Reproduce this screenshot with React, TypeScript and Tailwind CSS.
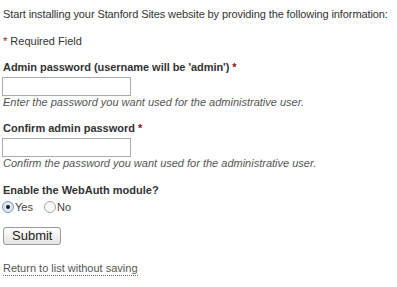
export default function App() {
  return (
    <div className="min-h-screen bg-white text-[11px] leading-[14px] text-[#333] font-['Liberation_Sans',Arial,sans-serif] px-[3px] pt-[7px]">
      <p className="whitespace-nowrap tracking-[-0.1px]">
        Start installing your Stanford Sites website by providing the following information:
      </p>

      <p className="mt-[13px]">
        <span className="text-[#8c1515]">*</span> Required Field
      </p>

      <form className="mt-[12px]" onSubmit={(e) => e.preventDefault()}>
        <div>
          <label className="block font-bold tracking-[-0.05px]">
            Admin password (username will be 'admin') <span className="text-[#8c1515]">*</span>
          </label>
          <input type="password" className="mt-[3px] ml-[-1px] block w-[129px] h-[19px] border border-[#aaa] bg-white" />
          <p className="mt-[-1px] italic text-[#555]">Enter the password you want used for the administrative user.</p>
        </div>

        <div className="mt-[12px]">
          <label className="block font-bold">
            Confirm admin password <span className="text-[#8c1515]">*</span>
          </label>
          <input type="password" className="mt-[3px] ml-[-1px] block w-[129px] h-[19px] border border-[#aaa] bg-white" />
          <p className="mt-[-1px] italic text-[#555]">Confirm the password you want used for the administrative user.</p>
        </div>

        <div className="mt-[13px]">
          <div className="font-bold">Enable the WebAuth module?</div>
          <div className="flex items-center mt-[3px] ml-[-1px]">
            <label className="flex items-center">
              <span className="w-[12px] h-[12px] rounded-full border border-[#7f93bd] bg-[#dfe8f6] flex items-center justify-center">
                <span className="w-[4px] h-[4px] rounded-full bg-[#1a1a1a]" />
              </span>
              <span className="ml-[1px] text-[#444]">Yes</span>
            </label>
            <label className="flex items-center ml-[11px]">
              <span className="w-[12px] h-[12px] rounded-full border border-[#aaa] bg-[#f8f8f8]" />
              <span className="ml-[1px] text-[#444]">No</span>
            </label>
          </div>
        </div>

        <button className="block mt-[13px] h-[18px] px-[8px] text-[13px] leading-[16px] text-[#222] border border-[#9a9a9a] rounded-[3px] bg-gradient-to-b from-white to-[#e4e4e4]">
          Submit
        </button>
      </form>

      <a href="#" className="inline-block mt-[16px] text-[#555] border-b border-dotted border-[#666]">
        Return to list without saving
      </a>
    </div>
  )
}
